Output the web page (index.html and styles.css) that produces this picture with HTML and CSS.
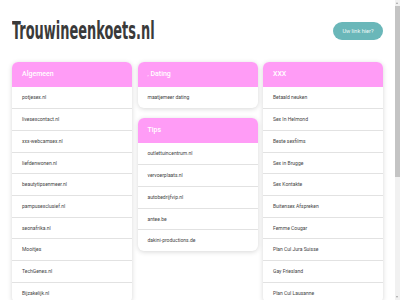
FILE: index.html
```html
<!DOCTYPE html>
<html>
<head>
	<title>Trouwineenkoets.nl</title>
	<link rel="stylesheet" href="styles.css">
</head>
<body>
	<div class="page">
		<div class="top">
			<h1 class="logo"><span>Trouwineenkoets.nl</span></h1>
			<a class="cta" href="#">Uw link hier?</a>
		</div>
		<div class="grid">
			<div class="col">
				<div class="card">
					<div class="card-head">Algemeen</div>
					<a class="row" href="#">potjesex.nl</a>
					<a class="row" href="#">livesexcontact.nl</a>
					<a class="row" href="#">xxx-webcamsex.nl</a>
					<a class="row" href="#">liefdenwonen.nl</a>
					<a class="row" href="#">beautytipsenmeer.nl</a>
					<a class="row" href="#">pampusexclusief.nl</a>
					<a class="row" href="#">seonafrika.nl</a>
					<a class="row" href="#">Mooitjes</a>
					<a class="row" href="#">TechGenes.nl</a>
					<a class="row" href="#">Bijzakelijk.nl</a>
				</div>
			</div>
			<div class="col">
				<div class="card">
					<div class="card-head"><span class="mark">,</span>Dating</div>
					<a class="row" href="#">maatjemeer dating</a>
				</div>
				<div class="card">
					<div class="card-head">Tips</div>
					<a class="row" href="#">outlettuincentrum.nl</a>
					<a class="row" href="#">vervoerplaats.nl</a>
					<a class="row" href="#">autobedrijfvip.nl</a>
					<a class="row" href="#">antee.be</a>
					<a class="row" href="#">dakini-productions.de</a>
				</div>
			</div>
			<div class="col">
				<div class="card">
					<div class="card-head">XXX</div>
					<a class="row" href="#">Betaald neuken</a>
					<a class="row" href="#">Sex In Helmond</a>
					<a class="row" href="#">Beste sexfilms</a>
					<a class="row" href="#">Sex in Brugge</a>
					<a class="row" href="#">Sex Kontakte</a>
					<a class="row" href="#">Buitensex Afspreken</a>
					<a class="row" href="#">Femme Cougar</a>
					<a class="row" href="#">Plan Cul Jura Suisse</a>
					<a class="row" href="#">Gay Friesland</a>
					<a class="row" href="#">Plan Cul Lausanne</a>
				</div>
			</div>
		</div>
	</div>
	<div class="scrollbar">
		<div class="arrow up"></div>
		<div class="thumb"></div>
		<div class="arrow down"></div>
	</div>
</body>
</html>
```

FILE: styles.css
```css
html, body {
	margin: 0;
	height: 100%;
	overflow: hidden;
	background: #ffffff;
	font-family: Roboto, "Liberation Sans", sans-serif;
}
.page {
	width: 371px;
	margin-left: 12px;
}
.top {
	display: flex;
	align-items: center;
	justify-content: space-between;
	height: 62px;
}
.logo {
	margin: 0;
	font-family: "DejaVu Sans Condensed", "Liberation Sans Narrow", sans-serif;
	font-weight: bold;
	font-size: 24px;
	line-height: 24px;
	color: #3a3a3a;
	white-space: nowrap;
	margin-top: -1px;
}
.logo span {
	display: inline-block;
	transform: scaleX(0.6);
	transform-origin: left center;
}
.cta {
	display: block;
	width: 50px;
	height: 18px;
	line-height: 18px;
	border-radius: 9px;
	background-color: #6ab7b9;
	color: #eef8f8;
	font-size: 5.6px;
	text-align: center;
	text-decoration: none;
}
.grid {
	display: grid;
	grid-template-columns: 120px 120px 120px;
	column-gap: 5.5px;
}
.col {
	display: flex;
	flex-direction: column;
	gap: 10px;
}
.card {
	background: #ffffff;
	border-radius: 6px;
	box-shadow: 0 1px 5px rgba(0, 0, 0, 0.16);
	overflow: hidden;
}
.card-head {
	height: 24.5px;
	line-height: 24.5px;
	padding-left: 10px;
	background-color: #ff9cf6;
	color: #ffffff;
	font-size: 7px;
	font-weight: 500;
}
.mark {
	display: inline-block;
	width: 3px;
	font-size: 5px;
}
.row {
	display: block;
	height: 21.7px;
	line-height: 21px;
	padding-left: 10px;
	border-top: 1px solid #e2e2e2;
	box-sizing: border-box;
	color: #444444;
	font-size: 5px;
	text-decoration: none;
}
.card-head + .row {
	border-top: none;
	line-height: 21.7px;
}
.scrollbar {
	position: fixed;
	top: 0;
	right: 0;
	width: 5px;
	height: 300px;
	background: #f1f1f1;
}
.thumb {
	position: absolute;
	top: 6px;
	left: 0;
	width: 5px;
	height: 171px;
	background: #c4c4c4;
}
.arrow {
	position: absolute;
	left: 1px;
	width: 0;
	height: 0;
	border-left: 1.5px solid transparent;
	border-right: 1.5px solid transparent;
}
.arrow.up {
	top: 2px;
	border-bottom: 2px solid #a3a3a3;
}
.arrow.down {
	bottom: 2px;
	border-top: 2px solid #a3a3a3;
}
```
